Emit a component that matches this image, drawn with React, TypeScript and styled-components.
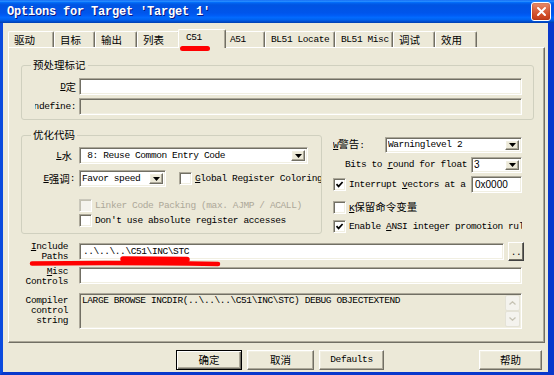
import React from 'react';
import styled, { createGlobalStyle, css } from 'styled-components';

const TABS: Array<{ label: string; w: number; cjk?: boolean; active?: boolean }> = [
  { label: '驱动', w: 46, cjk: true },
  { label: '目标', w: 41, cjk: true },
  { label: '输出', w: 42, cjk: true },
  { label: '列表', w: 43, cjk: true },
  { label: 'C51', w: 44, active: true },
  { label: 'A51', w: 41 },
  { label: 'BL51 Locate', w: 70 },
  { label: 'BL51 Misc', w: 58 },
  { label: '调试', w: 42, cjk: true },
  { label: '效用', w: 42, cjk: true }
];

function ComboBox ({ w, h, value, sans }: { w: number; h: number; value: string; sans?: boolean }): React.ReactElement {
  return (
    <Combo $w={w} $h={h}>
      <ComboValue $sans={sans}>{value}</ComboValue>
      <DropButton>
        <svg width='7' height='4' viewBox='0 0 7 4'>
          <path d='M0 0h7L3.5 4z' fill='#000' />
        </svg>
      </DropButton>
    </Combo>
  );
}

function Check ({ checked = false, disabled = false }: { checked?: boolean; disabled?: boolean }): React.ReactElement {
  return (
    <CheckBox $disabled={disabled}>
      {checked && (
        <svg width='9' height='9' viewBox='0 0 9 9'>
          <path d='M1.5 4.2 L3.6 6.4 L7.6 2' fill='none' stroke='#000' strokeWidth='1.7' />
        </svg>
      )}
    </CheckBox>
  );
}

export default function App (): React.ReactElement {
  return (
    <>
      <GlobalStyle />
      <Window>
        <TitleBar>
          <TitleText>Options for Target 'Target 1'</TitleText>
          <CloseButton>
            <svg width='11' height='11' viewBox='0 0 11 11'>
              <path d='M2 2 L9 9 M9 2 L2 9' stroke='#fff' strokeWidth='2' strokeLinecap='round' />
            </svg>
          </CloseButton>
        </TitleBar>
        <Frame>
          <TabStrip>
            {TABS.map((tab) => (
              <Tab key={tab.label} $w={tab.w} $active={tab.active}>
                {tab.cjk ? <Cjk>{tab.label}</Cjk> : tab.label}
              </Tab>
            ))}
          </TabStrip>
          <Panel>
            {/* preprocessor symbols */}
            <Group $w={513} $pt={7} $pb={4}>
              <Legend>预处理标记</Legend>
              <FieldRow $h={17}>
                <FieldLabel $w={54}><u>D</u><Cjk>定</Cjk></FieldLabel>
                <TextBox $w={443} $h={17} />
              </FieldRow>
              <FieldRow $h={17} $mt={3}>
                <FieldLabel $w={41} $ml={13} $clip>Undefine:</FieldLabel>
                <TextBox $w={443} $h={17} $disabled />
              </FieldRow>
            </Group>

            <Middle>
              {/* code optimization */}
              <Group $w={301} $pt={6} $pb={6}>
                <Legend>优化代码</Legend>
                <FieldRow $h={17}>
                  <FieldLabel $w={50} $pr={4}><u>L</u><Cjk>水</Cjk></FieldLabel>
                  <ComboBox w={229} h={17} value=' 8: Reuse Common Entry Code' />
                </FieldRow>
                <FieldRow $h={17} $mt={6}>
                  <FieldLabel $w={53} $pr={1}><u>E</u><Cjk>强调</Cjk>:</FieldLabel>
                  <ComboBox w={87} h={17} value='Favor speed' />
                  <CheckLine $ml={10}>
                    <Check />
                    <span><u>G</u>lobal Register Coloring</span>
                  </CheckLine>
                </FieldRow>
                <FieldRow $h={13} $mt={12} $indent={57}>
                  <CheckLine $muted>
                    <Check disabled />
                    <span>Linker Code Packing (max. AJMP / ACALL)</span>
                  </CheckLine>
                </FieldRow>
                <FieldRow $h={13} $mt={2} $indent={57}>
                  <CheckLine>
                    <Check />
                    <span>Don't use absolute register accesses</span>
                  </CheckLine>
                </FieldRow>
              </Group>

              {/* warnings and misc switches */}
              <RightColumn>
                <RightRow $h={16} $justify='space-between'>
                  <span><u>W</u><Cjk>警告</Cjk>:</span>
                  <ComboBox w={137} h={16} value='Warninglevel 2' />
                </RightRow>
                <RightRow $h={16} $mt={4} $justify='flex-end'>
                  <span>Bits to <u>r</u>ound for float</span>
                  <ComboBox w={51} h={16} value='3' sans />
                </RightRow>
                <RightRow $h={17} $mt={3} $justify='space-between'>
                  <CheckLine>
                    <Check checked />
                    <span>Interrupt <u>v</u>ectors at a</span>
                  </CheckLine>
                  <TextBox $w={51} $h={17} $sans>0x0000</TextBox>
                </RightRow>
                <RightRow $h={13} $mt={8}>
                  <CheckLine>
                    <Check />
                    <span><u>K</u><Cjk>保留命令变量</Cjk></span>
                  </CheckLine>
                </RightRow>
                <RightRow $h={13} $mt={6}>
                  <CheckLine>
                    <Check checked />
                    <span>Enable <u>A</u>NSI integer promotion rules</span>
                  </CheckLine>
                </RightRow>
              </RightColumn>
            </Middle>

            {/* include paths */}
            <BottomRow $mt={8}>
              <SideLabel><u>I</u>nclude<br />Paths</SideLabel>
              <TextBox $w={425} $h={17} $mt={1}>{'..\\..\\..\\C51\\INC\\STC'}</TextBox>
              <SmallButton>..</SmallButton>
            </BottomRow>
            {/* misc controls */}
            <BottomRow $mt={5}>
              <SideLabel><u>M</u>isc<br />Controls</SideLabel>
              <TextBox $w={443} $h={17} />
            </BottomRow>
            {/* compiler control string */}
            <BottomRow $mt={6}>
              <SideLabel $pt={3}>Compiler<br />control<br />string</SideLabel>
              <Memo>
                <MemoText>{'LARGE BROWSE INCDIR(..\\..\\..\\C51\\INC\\STC) DEBUG OBJECTEXTEND'}</MemoText>
                <ScrollBar>
                  <ScrollArrow>
                    <svg width='7' height='4' viewBox='0 0 7 4'>
                      <path d='M0.5 3.5 L3.5 0.8 L6.5 3.5' fill='none' stroke='#C6C3B4' strokeWidth='1.3' />
                    </svg>
                  </ScrollArrow>
                  <ScrollArrow>
                    <svg width='7' height='4' viewBox='0 0 7 4'>
                      <path d='M0.5 0.5 L3.5 3.2 L6.5 0.5' fill='none' stroke='#C6C3B4' strokeWidth='1.3' />
                    </svg>
                  </ScrollArrow>
                </ScrollBar>
              </Memo>
            </BottomRow>
          </Panel>
          <ButtonRow>
            <PushButton $w={66} $default><Cjk>确定</Cjk></PushButton>
            <PushButton $w={67}><Cjk>取消</Cjk></PushButton>
            <PushButton $w={65}>Defaults</PushButton>
            <PushButton $w={63} $push><Cjk>帮助</Cjk></PushButton>
          </ButtonRow>
        </Frame>

        {/* red pen marks drawn over the screenshot */}
        <Marks width={554} height={375}>
          <path d='M182.5 48.5 L207.5 48.5' stroke='#f00' strokeWidth={5} strokeLinecap='round' />
          <path d='M32 263.5 C 100 262.5, 160 263, 218 264' stroke='#f00' strokeWidth={4.5} strokeLinecap='round' fill='none' />
          <path d='M123 259 L187 259.5' stroke='#f00' strokeWidth={5.5} strokeLinecap='round' />
        </Marks>
      </Window>
    </>
  );
}

const GlobalStyle = createGlobalStyle`
  html, body {
    margin: 0;
    padding: 0;
    background: #fff;
  }
  body {
    font-family: "Liberation Mono", "Noto Sans CJK SC", monospace;
    font-size: 9.5px;
    line-height: 12px;
    letter-spacing: -0.4px;
    color: #000;
  }
  *, *::before, *::after {
    box-sizing: border-box;
  }
  u {
    text-underline-offset: 1px;
  }
`;

const sunken = css`
  border: 1px solid;
  border-color: #ACA899 #FFFFFF #FFFFFF #ACA899;
  box-shadow: inset 1px 1px 0 #716F64, inset -1px -1px 0 #F1EFE2;
`;

const raised = css`
  border: 1px solid;
  border-color: #FFFFFF #716F64 #716F64 #FFFFFF;
  box-shadow: inset -1px -1px 0 #ACA899, inset 1px 1px 0 #F1EFE2;
`;

const Cjk = styled.span`
  font-family: "Noto Sans CJK SC", sans-serif;
  font-size: 10.5px;
  letter-spacing: 0;
`;

const Window = styled.div`
  position: relative;
  width: 554px;
  height: 375px;
  display: flex;
  flex-direction: column;
  overflow: hidden;
`;

const TitleBar = styled.div`
  flex: none;
  height: 23px;
  display: flex;
  align-items: center;
  padding: 0 3px 0 7px;
  background: linear-gradient(to bottom, #0058EE 0%, #3593FF 4%, #288EFF 6%, #127DFF 8%, #036FFC 10%, #0262EE 14%, #0057E5 20%, #0054E3 24%, #0055EB 56%, #005BF5 66%, #026AFE 76%, #0062EF 86%, #0052D6 92%, #0046C0 96%, #0040B0 100%);
`;

const TitleText = styled.div`
  font-family: "Liberation Mono", monospace;
  font-weight: bold;
  font-size: 12px;
  letter-spacing: -0.2px;
  color: #fff;
  text-shadow: 1px 1px 0 #0A1883;
  white-space: pre;
`;

const CloseButton = styled.div`
  margin-left: auto;
  width: 20px;
  height: 19px;
  display: flex;
  align-items: center;
  justify-content: center;
  border: 1px solid #fff;
  border-radius: 3px;
  background: linear-gradient(to bottom, #E9906F 0%, #DC6845 35%, #CF4A24 75%, #C23E1B 100%);
  box-shadow: inset 0 0 2px rgba(120, 20, 0, 0.5);
`;

const Frame = styled.div`
  flex: 1;
  display: flex;
  flex-direction: column;
  background: #ECE9D8;
  border-left: 3px solid #0B4BDE;
  border-right: 6px solid #0838CC;
  border-bottom: 3px solid #0838CC;
  padding: 6px 3px 2px 5px;
`;

const TabStrip = styled.div`
  height: 18px;
  display: flex;
  align-items: flex-end;
`;

const Tab = styled.div<{ $w: number; $active?: boolean }>`
  flex: none;
  width: ${(p) => p.$w}px;
  height: 16px;
  padding-left: 5px;
  display: flex;
  align-items: center;
  white-space: nowrap;
  background: #ECE9D8;
  border-top: 1px solid #fff;
  border-left: 1px solid #fff;
  border-right: 1px solid #716F64;
  border-radius: 2px 2px 0 0;
  box-shadow: inset -1px 0 0 #ACA899;
  ${(p) => p.$active && css`
    position: relative;
    z-index: 1;
    width: ${p.$w + 4}px;
    height: 19px;
    margin: 0 -2px -1px;
    padding-left: 7px;
    padding-bottom: 2px;
  `}
`;

const Panel = styled.div`
  height: 296px;
  display: flex;
  flex-direction: column;
  padding: 11px 0 0 12px;
  border: 1px solid;
  border-color: #fff #716F64 #716F64 #fff;
  box-shadow: inset -1px -1px 0 #ACA899;
`;

const Group = styled.fieldset<{ $w: number; $pt: number; $pb: number }>`
  flex: none;
  width: ${(p) => p.$w}px;
  min-width: 0;
  margin: 0;
  padding: ${(p) => p.$pt}px 0 ${(p) => p.$pb}px 0;
  border: 1px solid #D0D0BF;
  border-radius: 3px;
`;

const Legend = styled.legend`
  margin-left: 9px;
  padding: 0 2px;
  font-family: "Noto Sans CJK SC", sans-serif;
  font-size: 10.5px;
  line-height: 12px;
  letter-spacing: 0;
`;

const FieldRow = styled.div<{ $h: number; $mt?: number; $indent?: number }>`
  width: 299px;
  height: ${(p) => p.$h}px;
  margin-top: ${(p) => p.$mt ?? 0}px;
  padding-left: ${(p) => p.$indent ?? 0}px;
  display: flex;
  align-items: center;
  gap: 3px;
  white-space: nowrap;
  overflow-x: clip;
  overflow-y: visible;

  fieldset:first-of-type > & {
    width: auto;
  }
`;

const FieldLabel = styled.label<{ $w: number; $ml?: number; $pr?: number; $clip?: boolean }>`
  flex: none;
  width: ${(p) => p.$w}px;
  margin-left: ${(p) => p.$ml ?? 0}px;
  margin-right: ${(p) => p.$pr ?? 0}px;
  display: flex;
  justify-content: flex-end;
  align-items: center;
  white-space: nowrap;
  overflow-x: ${(p) => (p.$clip ? 'clip' : 'visible')};
`;

const TextBox = styled.div<{ $w: number; $h: number; $mt?: number; $disabled?: boolean; $sans?: boolean }>`
  ${sunken}
  flex: none;
  width: ${(p) => p.$w}px;
  height: ${(p) => p.$h}px;
  margin-top: ${(p) => p.$mt ?? 0}px;
  padding: 0 3px;
  display: flex;
  align-items: center;
  white-space: pre;
  overflow: hidden;
  background: ${(p) => (p.$disabled ? '#ECE9D8' : '#fff')};
  ${(p) => p.$sans && css`
    font-family: "Liberation Sans", sans-serif;
    font-size: 10px;
    letter-spacing: 0;
  `}
`;

const Combo = styled.div<{ $w: number; $h: number }>`
  ${sunken}
  flex: none;
  width: ${(p) => p.$w}px;
  height: ${(p) => p.$h}px;
  padding: 2px;
  display: flex;
  align-items: stretch;
  background: #fff;
`;

const ComboValue = styled.span<{ $sans?: boolean }>`
  flex: 1;
  min-width: 0;
  display: flex;
  align-items: center;
  white-space: pre;
  overflow: hidden;
  ${(p) => p.$sans && css`
    font-family: "Liberation Sans", sans-serif;
    font-size: 10px;
    letter-spacing: 0;
  `}
`;

const DropButton = styled.span`
  ${raised}
  flex: none;
  width: 14px;
  display: flex;
  align-items: center;
  justify-content: center;
  background: #ECE9D8;
`;

const CheckLine = styled.div<{ $ml?: number; $muted?: boolean }>`
  display: flex;
  align-items: center;
  gap: 3px;
  margin-left: ${(p) => p.$ml ?? 0}px;
  white-space: nowrap;
  color: ${(p) => (p.$muted ? '#ACA899' : '#000')};
`;

const CheckBox = styled.span<{ $disabled?: boolean }>`
  ${sunken}
  flex: none;
  width: 13px;
  height: 13px;
  display: flex;
  align-items: center;
  justify-content: center;
  background: ${(p) => (p.$disabled ? '#F4F3EE' : '#fff')};
  ${(p) => p.$disabled && css`
    border-color: #CAC8BB #FFFFFF #FFFFFF #CAC8BB;
    box-shadow: inset 1px 1px 0 #C2C0B2;
  `}
`;

const Middle = styled.div`
  display: flex;
  align-items: flex-start;
  margin-top: 9px;
`;

const RightColumn = styled.div`
  width: 189px;
  margin: 8px 0 0 11px;
  display: flex;
  flex-direction: column;
`;

const RightRow = styled.div<{ $h: number; $mt?: number; $justify?: string }>`
  height: ${(p) => p.$h}px;
  margin-top: ${(p) => p.$mt ?? 0}px;
  display: flex;
  align-items: center;
  justify-content: ${(p) => p.$justify ?? 'flex-start'};
  gap: 4px;
  white-space: nowrap;
  overflow-x: clip;
  overflow-y: visible;
`;

const BottomRow = styled.div<{ $mt: number }>`
  display: flex;
  align-items: flex-start;
  margin-top: ${(p) => p.$mt}px;
`;

const SideLabel = styled.div<{ $pt?: number }>`
  flex: none;
  width: 47px;
  margin-right: 11px;
  padding-top: ${(p) => p.$pt ?? 0}px;
  text-align: right;
  line-height: 10px;
  white-space: nowrap;
`;

const SmallButton = styled.div`
  ${raised}
  flex: none;
  width: 16px;
  height: 19px;
  margin-left: 4px;
  display: flex;
  align-items: flex-end;
  justify-content: center;
  padding-bottom: 3px;
  border-color: #FFFFFF #404040 #404040 #FFFFFF;
  box-shadow: inset -1px -1px 0 #716F64;
  background: #ECE9D8;
  line-height: 8px;
`;

const Memo = styled.div`
  ${sunken}
  flex: none;
  width: 443px;
  height: 36px;
  display: flex;
  padding: 1px 1px 1px 2px;
  background: #ECE9D8;
`;

const MemoText = styled.div`
  flex: 1;
  line-height: 10px;
  padding-top: 1px;
  white-space: pre;
  overflow: hidden;
`;

const ScrollBar = styled.div`
  flex: none;
  width: 15px;
  display: flex;
  flex-direction: column;
`;

const ScrollArrow = styled.div`
  height: 17px;
  display: flex;
  align-items: center;
  justify-content: center;
  background: #F4F3EE;
  border: 1px solid #E4E2D6;
  border-radius: 2px;
`;

const ButtonRow = styled.div`
  height: 20px;
  margin-top: 7px;
  padding: 0 3px 0 168px;
  display: flex;
  gap: 5px;
`;

const PushButton = styled.div<{ $w: number; $default?: boolean; $push?: boolean }>`
  ${raised}
  flex: none;
  width: ${(p) => p.$w}px;
  height: 20px;
  margin-left: ${(p) => (p.$push ? 'auto' : '0')};
  display: flex;
  align-items: center;
  justify-content: center;
  background: #ECE9D8;
  ${(p) => p.$default && css`
    border: 1px solid #000;
    box-shadow: inset 1px 1px 0 #fff, inset -1px -1px 0 #716F64, inset -2px -2px 0 #ACA899;
  `}
`;

const Marks = styled.svg`
  position: absolute;
  left: 0;
  top: 0;
  pointer-events: none;
  z-index: 5;
`;
